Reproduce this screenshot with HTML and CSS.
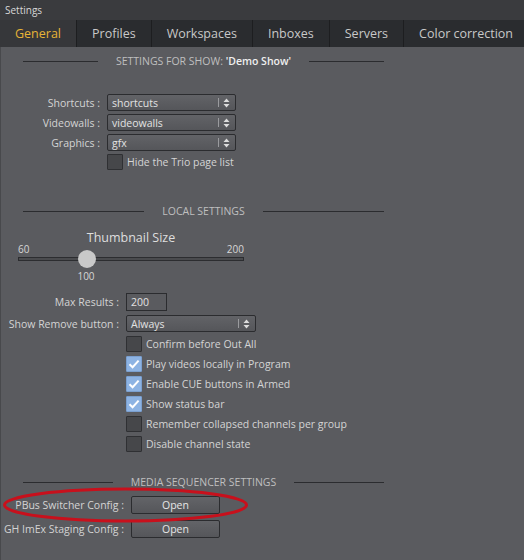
FILE: index.html
```html
<!DOCTYPE html>
<html>
<head>
<meta charset="utf-8">
<title>Settings</title>
<link rel="stylesheet" href="styles.css">
</head>
<body>
<div class="window">
  <div class="titlebar">Settings</div>
  <div class="tabs">
    <div class="tab active">General</div>
    <div class="tab">Profiles</div>
    <div class="tab">Workspaces</div>
    <div class="tab">Inboxes</div>
    <div class="tab">Servers</div>
    <div class="tab last">Color correction</div>
  </div>
  <div class="content">
    <div class="section-head head-show">
      <span class="line"></span>
      <span class="head-text">SETTINGS FOR SHOW: <b>'Demo Show'</b></span>
      <span class="line"></span>
    </div>

    <div class="form form-show">
      <div class="label">Shortcuts :</div>
      <div class="select sel-show"><span class="val">shortcuts</span><span class="sep"></span><svg class="arrows" width="7" height="10" viewBox="0 0 7 10"><path d="M3.5 0.5 L6.5 4 L0.5 4 Z M0.5 6 L6.5 6 L3.5 9.5 Z" fill="#dcdcdc"/></svg></div>
      <div class="label">Videowalls :</div>
      <div class="select sel-show"><span class="val">videowalls</span><span class="sep"></span><svg class="arrows" width="7" height="10" viewBox="0 0 7 10"><path d="M3.5 0.5 L6.5 4 L0.5 4 Z M0.5 6 L6.5 6 L3.5 9.5 Z" fill="#dcdcdc"/></svg></div>
      <div class="label">Graphics :</div>
      <div class="select sel-show"><span class="val">gfx</span><span class="sep"></span><svg class="arrows" width="7" height="10" viewBox="0 0 7 10"><path d="M3.5 0.5 L6.5 4 L0.5 4 Z M0.5 6 L6.5 6 L3.5 9.5 Z" fill="#dcdcdc"/></svg></div>
      <div class="label"></div>
      <div class="check"><span class="box"></span><span class="ctext">Hide the Trio page list</span></div>
    </div>

    <div class="section-head head-local">
      <span class="line"></span>
      <span class="head-text">LOCAL SETTINGS</span>
      <span class="line"></span>
    </div>

    <div class="slider">
      <div class="slider-title">Thumbnail Size</div>
      <div class="slider-range"><span>60</span><span>200</span></div>
      <div class="track">
        <span class="handle" style="left: 59px"></span>
      </div>
      <div class="slider-value"><span class="value-text" style="left: 68px">100</span></div>
    </div>

    <div class="form form-local">
      <div class="label">Max Results :</div>
      <div class="input">200</div>
      <div class="label">Show Remove button :</div>
      <div class="select sel-local"><span class="val">Always</span><span class="sep"></span><svg class="arrows" width="7" height="10" viewBox="0 0 7 10"><path d="M3.5 0.5 L6.5 4 L0.5 4 Z M0.5 6 L6.5 6 L3.5 9.5 Z" fill="#dcdcdc"/></svg></div>
      <div class="label"></div>
      <div class="check"><span class="box"></span><span class="ctext">Confirm before Out All</span></div>
      <div class="label"></div>
      <div class="check"><span class="box on"><svg width="14" height="14" viewBox="0 0 14 14"><path d="M2.5 7.2 L5.6 10.2 L11.6 3.6" fill="none" stroke="#ffffff" stroke-width="2"/></svg></span><span class="ctext">Play videos locally in Program</span></div>
      <div class="label"></div>
      <div class="check"><span class="box on"><svg width="14" height="14" viewBox="0 0 14 14"><path d="M2.5 7.2 L5.6 10.2 L11.6 3.6" fill="none" stroke="#ffffff" stroke-width="2"/></svg></span><span class="ctext">Enable CUE buttons in Armed</span></div>
      <div class="label"></div>
      <div class="check"><span class="box on"><svg width="14" height="14" viewBox="0 0 14 14"><path d="M2.5 7.2 L5.6 10.2 L11.6 3.6" fill="none" stroke="#ffffff" stroke-width="2"/></svg></span><span class="ctext">Show status bar</span></div>
      <div class="label"></div>
      <div class="check"><span class="box"></span><span class="ctext">Remember collapsed channels per group</span></div>
      <div class="label"></div>
      <div class="check"><span class="box"></span><span class="ctext">Disable channel state</span></div>
    </div>

    <div class="section-head head-media">
      <span class="line"></span>
      <span class="head-text">MEDIA SEQUENCER SETTINGS</span>
      <span class="line"></span>
    </div>

    <div class="form form-media">
      <div class="label">PBus Switcher Config :</div>
      <div class="button">Open</div>
      <div class="label">GH ImEx Staging Config :</div>
      <div class="button">Open</div>
    </div>

    <svg class="annotation" width="250" height="38" viewBox="0 0 250 38">
      <ellipse cx="124.5" cy="18" rx="121" ry="16" fill="none" stroke="#c8101c" stroke-width="3"/>
    </svg>
  </div>
</div>
</body>
</html>
```

FILE: styles.css
```css
* { box-sizing: border-box; }

html, body {
  margin: 0;
  padding: 0;
  background: #5a5b5f;
}

body {
  font-family: "Open Sans", "Noto Sans", sans-serif;
  color: #d6d6d6;
  width: 524px;
  height: 560px;
  overflow: hidden;
}

.window {
  width: 524px;
  height: 560px;
  display: flex;
  flex-direction: column;
}

.titlebar {
  height: 20px;
  line-height: 20px;
  padding-left: 5px;
  font-size: 10px;
  color: #d8d8d8;
  background: #3a3b3e;
}

.tabs {
  height: 27px;
  display: flex;
  background: #2a2c2f;
}

.tab {
  height: 27px;
  line-height: 26px;
  padding: 1px 15px 0;
  font-size: 12.5px;
  color: #c8c8c8;
  border-right: 1px solid #1d1e20;
  white-space: nowrap;
}

.tab.active {
  color: #e6b437;
  background: #36373a;
}

.tab.last {
  flex: 1;
  border-right: none;
}

.content {
  flex: 1;
  position: relative;
  border-left: 1px solid #48494c;
  padding-top: 7px;
}

.section-head {
  display: flex;
  align-items: center;
  gap: 18px;
  margin-left: 22px;
  width: 361px;
  height: 14px;
  font-size: 10.5px;
  line-height: 14px;
  color: #bfbfbf;
}

.section-head .line {
  flex: 1;
  height: 1px;
  background: #2b2c2f;
}

.section-head b {
  color: #efefef;
  font-weight: 600;
}

.head-local { margin-top: 34px; }
.head-media { margin-top: 23px; }

.form {
  display: grid;
  align-items: center;
  font-size: 10.5px;
}

.form-show {
  margin-top: 26px;
  grid-template-columns: 99px 129px;
  column-gap: 7px;
  row-gap: 3px;
}

.form-local {
  margin-top: 11px;
  grid-template-columns: 118px auto;
  column-gap: 7px;
  row-gap: 4px;
  justify-items: start;
}

.form-media {
  margin-top: 7px;
  grid-template-columns: 123px 89px;
  column-gap: 7px;
  row-gap: 6px;
}

.label {
  text-align: right;
  white-space: nowrap;
  justify-self: stretch;
  color: #d4d4d4;
}

.select {
  height: 17px;
  display: flex;
  align-items: center;
  padding-left: 4px;
  border: 1px solid #2b2c2f;
  border-radius: 2px;
  background: linear-gradient(#626367, #55565a);
  color: #e2e2e2;
}

.select .val { flex: 1; }

.select .sep {
  width: 1px;
  height: 9px;
  background: #9a9b9e;
  margin-right: 4px;
}

.select .arrows { margin-right: 5px; }

.sel-local { width: 130px; }

.check {
  height: 16px;
  display: flex;
  align-items: center;
  gap: 4px;
  color: #d4d4d4;
  white-space: nowrap;
}

.box {
  width: 16px;
  height: 16px;
  border: 1px solid #2f3033;
  border-radius: 1px;
  background: #46474a;
  display: flex;
  align-items: center;
  justify-content: center;
}

.box.on {
  background: #8db3e3;
  border-color: #7a9fcf;
}

.slider {
  margin-top: 13px;
  margin-left: 17px;
  width: 226px;
}

.slider-title {
  text-align: center;
  font-size: 12.5px;
  line-height: 14px;
  color: #dedede;
}

.slider-range {
  display: flex;
  justify-content: space-between;
  margin-top: -1px;
  font-size: 10px;
  line-height: 10px;
  color: #d6d6d6;
}

.track {
  position: relative;
  margin-top: 3px;
  height: 4px;
  background: #4a4b4e;
  border: 1px solid #2c2d30;
}

.handle {
  position: absolute;
  top: -8px;
  width: 18px;
  height: 18px;
  border-radius: 50%;
  background: #c9c9c9;
}

.slider-value {
  position: relative;
  height: 12px;
  margin-top: 9px;
  font-size: 10px;
  line-height: 12px;
}

.value-text {
  position: absolute;
  top: 0;
  transform: translateX(-50%);
  color: #d6d6d6;
}

.input {
  width: 41px;
  height: 18px;
  line-height: 16px;
  padding-left: 4px;
  border: 1px solid #2b2c2f;
  background: #5a5b5f;
  color: #e2e2e2;
}

.button {
  height: 18px;
  line-height: 16px;
  text-align: center;
  border: 1px solid #2b2c2f;
  border-radius: 2px;
  background: linear-gradient(#636468, #55565a);
  color: #e6e6e6;
}

.annotation {
  position: absolute;
  left: 0;
  top: 440px;
}
```
